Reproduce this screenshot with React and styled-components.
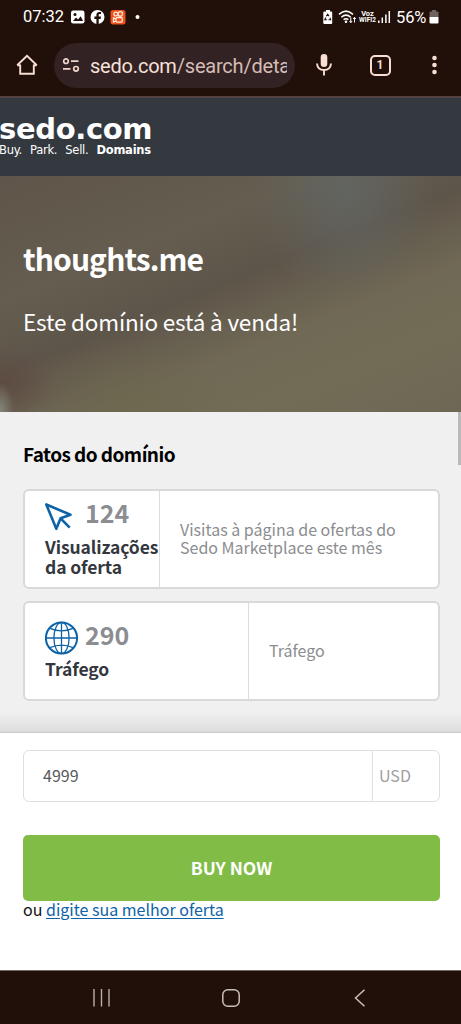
import styled, { createGlobalStyle } from "styled-components";

const facts = [
  {
    id: "views",
    icon: <CursorIcon />,
    value: "124",
    label: "Visualizações da oferta",
    text: "Visitas à página de ofertas do Sedo Marketplace este mês",
    side: 135,
  },
  {
    id: "traffic",
    icon: <GlobeIcon />,
    value: "290",
    label: "Tráfego",
    text: "Tráfego",
    side: 224,
  },
];

function CursorIcon() {
  return (
    <svg width="35" height="34" viewBox="0 0 35 34">
      <path
        d="M1.300 5.500L25.500 15.800L15.600 19.300L11.300 29.800ZM15.600 19.300L24.700 28.700"
        fill="none"
        stroke="#0e62a6"
        strokeWidth="2.600"
        strokeLinejoin="round"
      />
    </svg>
  );
}

function GlobeIcon() {
  return (
    <svg width="35" height="34" viewBox="0 0 35 34">
      <g fill="none" stroke="#0e62a6">
        <circle cx="16.500" cy="17" r="15.600" strokeWidth="2" />
        <ellipse cx="16.500" cy="17" rx="7.600" ry="15.600" strokeWidth="1.300" />
        <path
          d="M16.500 1v32M1 17h31M5 7.300Q16.500 12.400 28 7.300M5 26.700Q16.500 21.600 28 26.700"
          strokeWidth="1.300"
        />
      </g>
    </svg>
  );
}

function StatusBar() {
  return (
    <Status>
      <Clock>07:32</Clock>
      <svg width="72" height="16" viewBox="0 0 72 16">
        <rect x="0" y="1.5" width="13.5" height="13" rx="2.2" fill="#fff" />
        <path d="M2 12l3-3.6 2 2 2.7-3.2 2.4 4.8z" fill="#210f09" />
        <circle cx="4" cy="5.4" r="1.5" fill="#210f09" />
        <circle cx="26.500" cy="8" r="7" fill="#fff" />
        <path
          d="M25.400 15.5V9.9h-2V7.5h2V6.2c0-2.2 1.2-3.3 3.1-3.3h1.5v2h-1.1c-1 0-1.2.5-1.2 1.3v1.3h2.3l-.4 2.4h-1.9v5.6z"
          fill="#210f09"
        />
        <rect x="39.500" y="1" width="15" height="14.5" rx="2.5" fill="#f0501a" />
        <g fill="none" stroke="#ffe9dc" strokeWidth="1.3">
          <circle cx="44.800" cy="5" r="1.9" />
          <circle cx="49.300" cy="4.9" r="2.2" />
          <rect x="45" y="8.5" width="6.3" height="4.6" rx="1.3" />
          <path d="M45 10l-2.500-1v4l2.500-1" />
        </g>
        <circle cx="66.500" cy="8" r="2" fill="#fff" />
      </svg>
      <Grow />
      <svg width="34" height="16" viewBox="0 0 34 16">
        <path d="M3 2.5V1h4v1.5h1.2q1 0 1 1V14q0 1-1 1H1.300q-1 0-1-1V3.500q0-1 1-1z" fill="#fff" />
        <path
          d="M3.300 7.200l1.400-2 1.400 2M6.900 8.600l.8 2.200H5.500M3.900 10.800H1.800l1-2.200"
          fill="none"
          stroke="#210f09"
          strokeWidth="1.1"
        />
        <g fill="none" stroke="#fff" strokeWidth="1.5">
          <path d="M16 5.400Q23-1.200 30 5.400M18.300 8.200Q23 4 27.700 8.200M20.600 10.700Q23 8.800 25.400 10.700" />
        </g>
        <circle cx="23" cy="12.700" r="1.300" fill="#fff" />
        <path
          d="M27.800 8.500v5M26.500 12l1.300 1.700 1.300-1.700M31.500 13.500v-5M30.200 10l1.300-1.700 1.300 1.700"
          fill="none"
          stroke="#fff"
          strokeWidth="1"
        />
      </svg>
      <Carrier>
        <span>Voz</span>
        <span>WIFI2</span>
      </Carrier>
      <svg width="14" height="14" viewBox="0 0 14 14">
        <path d="M.8 10.500V13M4.300 7.500V13M7.900 4.500V13M11.300 1V13" stroke="#fff" strokeWidth="1.500" />
      </svg>
      <Percent>56%</Percent>
      <svg width="10" height="14" viewBox="0 0 10 14">
        <path d="M3 1.500V0h4v1.500h1.500q1 0 1 1V7H.5V2.500q0-1 1-1z" fill="#6f6460" />
        <path d="M.5 7h9v5.500q0 1-1 1h-7q-1 0-1-1z" fill="#fff" />
      </svg>
    </Status>
  );
}

function BrowserBar() {
  return (
    <Browser>
      <svg width="22" height="22" viewBox="0 0 22 22">
        <path
          d="M4.200 10.500v9.300h13.600v-9.300M1.200 11.300L11 1.900l9.800 9.400M1.200 11.300h3M17.800 11.300h3"
          fill="none"
          stroke="#f9ddd3"
          strokeWidth="1.900"
        />
      </svg>
      <AddressBox>
        <svg width="18" height="16" viewBox="0 0 18 16">
          <g fill="none" stroke="#f0d6cc" strokeWidth="1.700">
            <circle cx="4" cy="4.200" r="2.300" />
            <path d="M9 4.200h7.500M1 11.800h7.500" />
            <circle cx="14" cy="11.800" r="2.300" />
          </g>
        </svg>
        <Address>
          sedo.com<Path>/search/deta</Path>
        </Address>
      </AddressBox>
      <Tools>
        <svg width="18" height="24" viewBox="0 0 18 24">
          <rect x="5.700" y="1" width="6.600" height="13" rx="3.300" fill="#f9ddd3" />
          <path
            d="M2 10.500q.5 6.500 7 6.500t7-6.500M9 17v5.500"
            fill="none"
            stroke="#f9ddd3"
            strokeWidth="1.900"
          />
        </svg>
        <TabCount>1</TabCount>
        <svg width="6" height="20" viewBox="0 0 6 20">
          <g fill="#f9ddd3">
            <circle cx="2.500" cy="3" r="2.300" />
            <circle cx="2.500" cy="10" r="2.300" />
            <circle cx="2.500" cy="17" r="2.300" />
          </g>
        </svg>
      </Tools>
    </Browser>
  );
}

function App() {
  const FactItems = facts.map((item) => (
    <Fact key={item.id} $side={item.side}>
      <FactMain>
        <FactTop>
          {item.icon}
          <FactValue>{item.value}</FactValue>
        </FactTop>
        <FactLabel>{item.label}</FactLabel>
      </FactMain>
      <FactText>{item.text}</FactText>
    </Fact>
  ));
  return (
    <Page>
      <GlobalStyle />
      <StatusBar />
      <BrowserBar />
      <Header>
        <Logo>sedo.com</Logo>
        <Slogan>
          <span>Buy.</span>
          <span>Park.</span>
          <span>Sell.</span>
          <b>Domains</b>
        </Slogan>
      </Header>
      <Hero>
        <Domain>thoughts.me</Domain>
        <Sale>Este domínio está à venda!</Sale>
      </Hero>
      <Facts>
        <FactsTitle>Fatos do domínio</FactsTitle>
        {FactItems}
        <ScrollThumb />
      </Facts>
      <Offer>
        <Price>
          <Amount>4999</Amount>
          <Currency>USD</Currency>
        </Price>
        <BuyButton>BUY NOW</BuyButton>
        <Alternative>
          ou <a href="#offer">digite sua melhor oferta</a>
        </Alternative>
      </Offer>
      <NavBar>
        <svg width="18" height="18" viewBox="0 0 18 18">
          <path d="M2 0v17.500M9.500 0v17.500M17 0v17.500" stroke="#b9aeaa" strokeWidth="1.400" />
        </svg>
        <svg width="18" height="18" viewBox="0 0 18 18">
          <rect x=".8" y=".8" width="16.400" height="16.400" rx="5" fill="none" stroke="#c9bfbb" strokeWidth="1.500" />
        </svg>
        <svg width="18" height="18" viewBox="0 0 18 18">
          <path d="M13.500 .7L4.500 9l9 8.300" fill="none" stroke="#c9bfbb" strokeWidth="1.500" />
        </svg>
      </NavBar>
    </Page>
  );
}

export default App;

const GlobalStyle = createGlobalStyle`
  * {
    box-sizing: border-box;
  }
  body {
    margin: 0;
    background: #fff;
  }
  svg {
    display: block;
    flex-shrink: 0;
  }
`;
const Page = styled.div`
  width: 461px;
  height: 1024px;
  overflow: hidden;
  display: grid;
  grid-template-rows: 34px 63px 79px 236px 321px 238px 53px;
  font-family: "Noto Sans CJK SC", "Noto Sans", sans-serif;
`;
const Status = styled.div`
  display: flex;
  align-items: center;
  padding: 0 22px 0 23px;
  background: #210f09;
  color: #fff;
  font-family: Roboto, sans-serif;
`;
const Clock = styled.div`
  width: 48px;
  font-size: 16.5px;
  line-height: 34px;
`;
const Grow = styled.div`
  flex: 1;
`;
const Carrier = styled.div`
  display: grid;
  justify-items: center;
  width: 21px;
  font-size: 7.5px;
  line-height: 7px;
  font-weight: 700;
  span + span {
    font-size: 6.5px;
  }
`;
const Percent = styled.div`
  width: 37px;
  padding-left: 4px;
  font-size: 16.5px;
  letter-spacing: -0.1px;
`;
const Browser = styled.div`
  display: flex;
  align-items: center;
  padding: 0 23px 0 16px;
  background: #210f09;
  border-bottom: 1px solid #5c3e36;
`;
const AddressBox = styled.div`
  display: flex;
  align-items: center;
  gap: 10px;
  width: 241px;
  height: 45px;
  margin-left: 16px;
  padding: 0 8px;
  border-radius: 23px;
  background: #322223;
`;
const Address = styled.div`
  flex: 1;
  padding-top: 1px;
  overflow: hidden;
  white-space: nowrap;
  color: #f7e0d8;
  font: 20px/28px Roboto, sans-serif;
  letter-spacing: -0.2px;
`;
const Path = styled.span`
  color: #d5bdb5;
`;
const Tools = styled.div`
  flex: 1;
  display: flex;
  align-items: center;
  justify-content: space-between;
  padding-left: 20px;
`;
const TabCount = styled.div`
  width: 21px;
  height: 21px;
  margin-right: 5px;
  border: 2px solid #f9ddd3;
  border-radius: 5px;
  color: #f9ddd3;
  font: 700 12px/17px Roboto, sans-serif;
  text-align: center;
`;
const Header = styled.div`
  padding-top: 16px;
  background: #343940;
  border-top: 1px solid #45484c;
  color: #fff;
  font-family: "DejaVu Sans", sans-serif;
`;
const Logo = styled.div`
  margin-left: -1px;
  font-size: 29px;
  line-height: 30px;
  font-weight: 700;
  letter-spacing: -0.35px;
`;
const Slogan = styled.div`
  display: flex;
  gap: 8px;
  margin-left: -1px;
  font-size: 11.5px;
  line-height: 13px;
  letter-spacing: -0.25px;
`;
const Hero = styled.div`
  padding: 62px 23px 0;
  color: #fff;
  background:
    radial-gradient(ellipse 14px 28px at 0 235px, #85857a, transparent),
    radial-gradient(ellipse 50px 36px at 5px 208px, rgba(93, 73, 64, 0.8), transparent),
    radial-gradient(ellipse 90px 110px at 345px 15px, rgba(98, 103, 101, 0.8), transparent),
    radial-gradient(ellipse 100px 60px at 130px 225px, rgba(108, 103, 76, 0.6), transparent),
    linear-gradient(158deg, #5f554a 0%, #655d50 30%, #5e554a 47%, #706955 65%, #726c56 80%, #6e6755 100%);
`;
const Domain = styled.h1`
  margin: 0;
  font-size: 30px;
  line-height: 40px;
  font-weight: 700;
  letter-spacing: -0.9px;
`;
const Sale = styled.p`
  margin: 23px 0 0;
  font-size: 22.5px;
  line-height: 40px;
  letter-spacing: -0.18px;
`;
const Facts = styled.div`
  position: relative;
  padding: 26px 21px 0 23px;
  background: linear-gradient(#f0f0f0 300px, #dedede 319px, #c8c8c8);
`;
const FactsTitle = styled.h2`
  margin: 0 0 19px;
  color: #000;
  font-size: 19px;
  line-height: 32px;
  font-weight: 700;
  letter-spacing: -0.55px;
`;
const Fact = styled.div`
  display: grid;
  grid-template-columns: ${(p) => p.$side}px 1fr;
  height: 100px;
  margin-bottom: 12px;
  border: 2px solid #d9d9d9;
  border-radius: 6px;
  background: #fff;
`;
const FactMain = styled.div`
  display: flex;
  flex-direction: column;
  justify-content: center;
  padding: 0 0 4px 20px;
  border-right: 1px solid #dcdcdc;
`;
const FactTop = styled.div`
  display: flex;
  gap: 5px;
  height: 39px;
  svg {
    margin-top: 1px;
  }
`;
const FactValue = styled.div`
  color: #8b8d90;
  font-size: 25px;
  line-height: 29px;
  font-weight: 700;
`;
const FactLabel = styled.div`
  color: #34383e;
  font-size: 17.5px;
  line-height: 20px;
  font-weight: 700;
  letter-spacing: -0.1px;
`;
const FactText = styled.div`
  align-self: center;
  padding: 0 20px 2px;
  color: #8b8d90;
  font-size: 16px;
  line-height: 18px;
`;
const ScrollThumb = styled.div`
  position: absolute;
  top: 0;
  right: 0;
  width: 3px;
  height: 53px;
  background: #b9b9b9;
`;
const Offer = styled.div`
  padding: 17px 21px 0 23px;
  background: #fff;
  border-bottom: 1px solid #766963;
`;
const Price = styled.div`
  display: grid;
  grid-template-columns: 349px 1fr;
  height: 52px;
  border: 1px solid #dfdfdf;
  border-radius: 6px;
  font-size: 16px;
  line-height: 48px;
`;
const Amount = styled.div`
  padding-left: 19px;
  border-right: 1px solid #dfdfdf;
  color: #58595b;
`;
const Currency = styled.div`
  padding-left: 6px;
  color: #a0a0a0;
`;
const BuyButton = styled.button`
  display: block;
  width: 100%;
  height: 66px;
  margin-top: 33px;
  padding: 0 0 2px;
  border: none;
  border-radius: 5px;
  background: #81bc46;
  color: #fff;
  font-family: inherit;
  font-size: 17.5px;
  font-weight: 700;
`;
const Alternative = styled.div`
  color: #111;
  font-size: 16px;
  line-height: 17px;
  a {
    color: #0e62a6;
    text-underline-offset: 2px;
  }
`;
const NavBar = styled.div`
  display: flex;
  align-items: center;
  justify-content: space-between;
  padding: 1px 92px 0;
  background: #210f09;
`;
